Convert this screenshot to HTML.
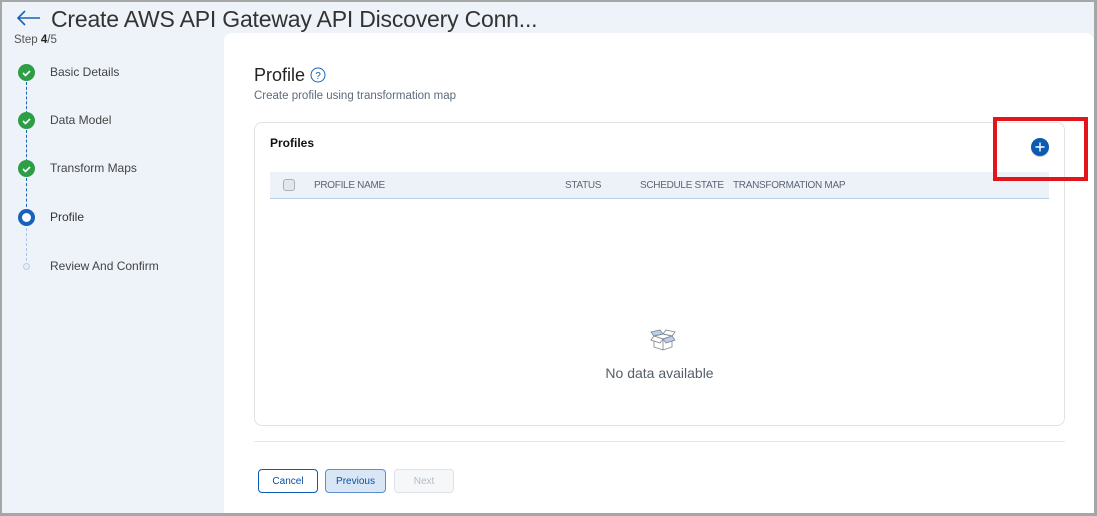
<!DOCTYPE html>
<html><head><meta charset="utf-8"><style>
*{box-sizing:border-box;margin:0;padding:0}
body{width:1097px;height:516px;overflow:hidden;font-family:"Liberation Sans",sans-serif;background:#a6a6a6;position:relative}
#app{position:absolute;left:2px;top:2px;width:1092px;height:511px;background:#eef2f9;overflow:hidden}
.title{position:absolute;left:49px;top:4px;font-size:23px;color:#333;letter-spacing:-0.2px}
.back{position:absolute;left:14px;top:8px}
.step{position:absolute;left:12px;top:32px;font-size:11.5px;color:#555}
.step b{color:#222}
.item{position:absolute;left:48px;font-size:12px;color:#444}
.dot{position:absolute;left:16px;width:17px;height:17px;border-radius:50%;background:#2e9e46}
.line{position:absolute;left:24px;border-left:1.5px dashed #1a62b8;width:0}
.main{position:absolute;left:222px;top:31px;width:870px;height:490px;background:#fff;border-radius:8px 8px 0 0}
.h1{position:absolute;left:30px;top:32px;font-size:18px;color:#222}
.sub{position:absolute;left:30px;top:57px;font-size:11.5px;color:#5e6b7a}
.card{position:absolute;left:30px;top:89px;width:811px;height:304px;border:1px solid #dfe3e8;border-radius:8px}
.th{position:absolute;left:15px;top:49px;width:779px;height:27px;background:#edf2f9;border-bottom:1px solid #b8cde8;font-size:10px;color:#5b6573;letter-spacing:-0.3px}
.th span{position:absolute;top:8px}
.btn{position:absolute;top:436px;height:24px;border-radius:4px;font-size:10px;text-align:center;line-height:23px}
</style></head><body><div id="app">
<svg class="back" width="26" height="16" viewBox="0 0 26 16"><path d="M2 8H24M9 1L2 8L9 15" fill="none" stroke="#1a62b8" stroke-width="1.6"/></svg>
<div class="title">Create AWS API Gateway API Discovery Conn...</div>
<div class="step">Step <b>4</b>/5</div>
<div class="line" style="top:80px;height:32px"></div>
<div class="line" style="top:128px;height:32px"></div>
<div class="line" style="top:176px;height:34px"></div>
<div class="line" style="top:226px;height:38px;border-color:#a9c4e6"></div>
<div class="dot" style="top:62px"></div><div class="dot" style="top:110px"></div><div class="dot" style="top:158px"></div>
<svg style="position:absolute;left:16px;top:62px" width="17" height="113"><g fill="none" stroke="#fff" stroke-width="1.6"><path d="M5 9l2.5 2.5L12 7"/><path d="M5 57l2.5 2.5L12 55"/><path d="M5 105l2.5 2.5L12 103"/></g></svg>
<div style="position:absolute;left:16px;top:207px;width:17px;height:17px;border-radius:50%;background:#0d4f9e;border:4px solid #1a62b8"><div style="width:9px;height:9px;margin:0;background:#fff;border-radius:50%"></div></div>
<div style="position:absolute;left:21px;top:261px;width:7px;height:7px;border-radius:50%;border:1.5px solid #b9cfea;background:#e6eef8"></div>
<div class="item" style="top:63px">Basic Details</div>
<div class="item" style="top:111px">Data Model</div>
<div class="item" style="top:159px">Transform Maps</div>
<div class="item" style="top:208px;color:#333">Profile</div>
<div class="item" style="top:257px">Review And Confirm</div>
<div class="main">
<div class="h1">Profile <svg width="16" height="16" style="vertical-align:-2px"><circle cx="8" cy="8" r="7" fill="none" stroke="#1a62b8" stroke-width="1"/><text x="8" y="12" font-size="10" text-anchor="middle" fill="#1a62b8" font-family="Liberation Sans">?</text></svg></div>
<div class="sub">Create profile using transformation map</div>
<div class="card">
<div style="position:absolute;left:15px;top:13px;font-size:12px;font-weight:bold;color:#111">Profiles</div>
<svg style="position:absolute;left:776px;top:15px;overflow:visible" width="18" height="18"><circle cx="9" cy="10" r="9" fill="rgba(0,0,0,.2)"/><circle cx="9" cy="9" r="9" fill="#0d5bb0"/><path d="M9 4.5v9M4.5 9h9" stroke="#fff" stroke-width="1.4"/></svg>
<div class="th"><div style="position:absolute;left:13px;top:7px;width:12px;height:12px;border:1px solid #a9b1bb;border-radius:3px;background:#e3e7ec"></div>
<span style="left:44px">PROFILE NAME</span><span style="left:295px">STATUS</span><span style="left:370px">SCHEDULE STATE</span><span style="left:463px">TRANSFORMATION MAP</span></div>
<svg style="position:absolute;left:393px;top:206px" width="30" height="24" viewBox="0 0 30 24"><g stroke="#7c848e" stroke-width="0.8" fill="none"><path d="M3 3l9-2 3 4-9 2z" fill="#b8d0ea"/><path d="M27 3l-9-2-3 4 9 2z" fill="#fff"/><path d="M6 7l9-2 9 2-9 3z"/><path d="M6 7v11l9 3 9-3V7"/><path d="M15 10v11"/><path d="M6 7l-3 4 9 3 3-4z" fill="#fff"/><path d="M24 7l3 4-9 3-3-4z" fill="#b8d0ea"/></g></svg>
<div style="position:absolute;left:0;width:100%;top:242px;text-align:center;font-size:14px;color:#555e69">No data available</div>
</div>
<div style="position:absolute;left:30px;top:408px;width:811px;border-top:1px solid #e5e8ec"></div>
<div class="btn" style="left:34px;width:60px;border:1.3px solid #0d5bb0;color:#0d4f9e">Cancel</div>
<div class="btn" style="left:101px;width:61px;border:1.3px solid #5c8fd0;background:#d8e6f5;color:#0d4f9e">Previous</div>
<div class="btn" style="left:170px;width:60px;border:1px solid #dde2e8;background:#f5f7f9;color:#b4bcc6">Next</div>
</div>
<div style="position:absolute;left:991px;top:115px;width:95px;height:64px;border:4px solid #e3151b"></div>
</div></body></html>
